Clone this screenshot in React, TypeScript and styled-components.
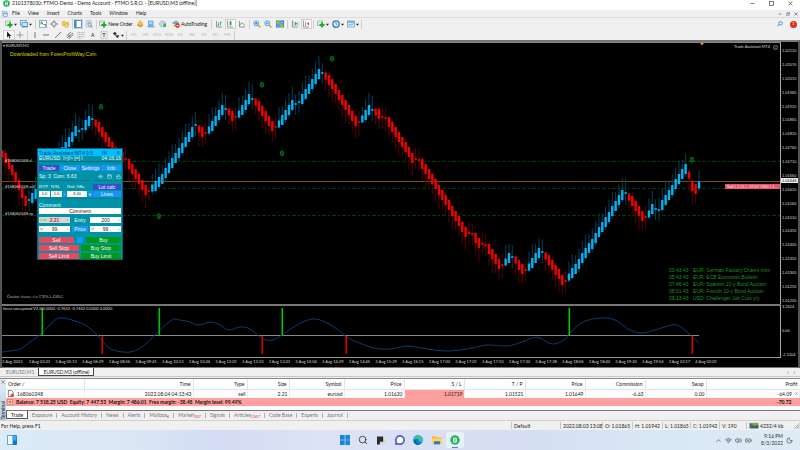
import React from "react";
import styled, { createGlobalStyle, css } from "styled-components";
import { Search, MessageCircle, Wifi, Volume2, BatteryCharging, Moon, ChevronUp, Camera, Eye, Calendar, Lock } from "lucide-react";

const ui = `"Lato", "Open Sans", sans-serif`;
const arial = `"Liberation Sans", Arial, sans-serif`;

const Global = createGlobalStyle`
  *, *::before, *::after { box-sizing: border-box; }
  body { margin: 0; background: #f0f0f0; font: 5px/8px ${ui}; color: #222; }
  button, input { font: inherit; color: inherit; border: 0; padding: 0; margin: 0; background: none; min-width: 0; border-radius: 0; }
  svg { display: block; flex: none; }
`;

const Page = styled.div`
  display: flex;
  flex-direction: column;
  min-height: 100vh;
  overflow: hidden;
  white-space: nowrap;
`;

/* ---------- title, menu and tool bars ---------- */
const TitleBar = styled.header`
  display: flex;
  align-items: center;
  gap: 2px;
  height: 10px;
  padding: 0 7px 3px 3px;
  background: #fff;
  line-height: 7px;
  color: #222;
`;
const WindowTitle = styled.h1`
  flex: 1;
  margin: 0;
  font: inherit;
`;
const WindowButtons = styled.div<{ $gap: number }>`
  display: flex;
  align-items: center;
  gap: ${(p) => p.$gap}px;
  margin-left: auto;
`;
const PlainButton = styled.button`
  display: flex;
  align-items: center;
  justify-content: center;
`;
const MenuBar = styled.nav`
  display: flex;
  align-items: center;
  height: 8px;
  padding: 0 2px;
  gap: 8px;
  line-height: 7px;
  border-bottom: 1px solid #dcdcdc;
`;
const MenuIcon = styled.span`
  margin-right: -4px;
`;
const Toolbar = styled.div<{ $h: number }>`
  display: flex;
  align-items: center;
  height: ${(p) => p.$h}px;
  padding: 0 3px;
`;
const Tools = styled.div<{ $w: number; $cols: number }>`
  display: grid;
  grid-template-columns: repeat(${(p) => p.$cols}, 1fr);
  width: ${(p) => p.$w}px;
  height: 10px;
`;
const Tool = styled.button<{ $on?: boolean; $faint?: boolean; $w?: number }>`
  display: flex;
  align-items: center;
  justify-content: center;
  gap: 1px;
  height: 10px;
  ${(p) => p.$w && `width: ${p.$w}px;`}
  color: ${(p) => (p.$faint ? "#b4b4b4" : "#111")};
  font: ${(p) => (p.$faint ? 4 : 5)}px/8px ${ui};
  ${(p) =>
    p.$on &&
    css`
      background: #fafafa;
      border: 1px solid #d0d0d0;
    `}
`;
const Divider = styled.span`
  width: 1px;
  height: 9px;
  margin: 0 1px;
  background: #cfcfcf;
`;
const Badge = styled.span`
  display: flex;
  align-items: center;
  justify-content: center;
  width: 7px;
  height: 7px;
  border-radius: 50%;
  background: #dd3018;
  color: #fff;
  font-size: 4px;
  line-height: 6px;
`;

/* ---------- chart ---------- */
const ChartFrame = styled.main`
  flex: 1;
  display: grid;
  grid-template-columns: 1fr 17px;
  grid-template-rows: 1fr 54px 9px;
  min-height: 300px;
  background: #000;
  color: #ddd;
  border: 2px solid #555;
  border-top-color: #777;
  border-bottom: 1px solid #777;
  font: 4px/6px ${ui};
`;
const Plot = styled.section`
  position: relative;
  min-height: 0;
  border-top: 1px solid #888;
  border-right: 1px solid #aaa;
`;
const SubPlot = styled(Plot)`
  border-top: 2px solid #777;
  border-bottom: 1px solid #999;
`;
const Fill = styled.svg`
  position: absolute;
  inset: 0;
  width: 100%;
  height: 100%;
`;
const Note = styled.div<{ $x?: number; $r?: number; $y: string; $c?: string; $s?: number; $f?: string }>`
  position: absolute;
  top: ${(p) => p.$y};
  ${(p) => (p.$r !== undefined ? `right: ${p.$r}px;` : `left: ${p.$x}px;`)}
  color: ${(p) => p.$c ?? "#ddd"};
  font: ${(p) => p.$s ?? 4}px/6px ${(p) => p.$f ?? ui};
`;
const PriceAxis = styled.div`
  position: relative;
  display: flex;
  flex-direction: column;
  justify-content: space-between;
  padding: 6px 0 0 1px;
  font-family: ${arial};
`;
const SubAxis = styled(PriceAxis)`
  padding: 0 0 0 1px;
`;
const PriceNow = styled.div`
  position: absolute;
  left: 0;
  right: 0;
  top: 52%;
  padding-left: 1px;
  background: #eee;
  color: #111;
  line-height: 5px;
`;
const SellTag = styled.div`
  position: absolute;
  right: 0;
  top: 54%;
  min-width: 55px;
  padding-left: 2px;
  background: #e8536a;
  color: #fde3e6;
  font: 4px/5px ${arial};
`;
const News = styled.ul`
  position: absolute;
  right: 6px;
  bottom: 2px;
  width: 105px;
  margin: 0;
  padding: 0;
  list-style: none;
  color: #1f961f;
  font: 5px/7px ${arial};
`;
const NewsItem = styled.li`
  display: grid;
  grid-template-columns: 24px 1fr;
`;
const TimeAxis = styled.div`
  grid-column: 1 / 3;
  display: grid;
  grid-template-columns: repeat(27, 1fr) 76px;
  line-height: 8px;
`;

/* ---------- trade assistant panel ---------- */
const Assistant = styled.form`
  position: absolute;
  left: 35px;
  top: 105px;
  width: 86px;
  display: flex;
  flex-direction: column;
  background: #0092a8;
  border: 1px solid #0b5f78;
  color: #e8fbff;
  font: 5px/6px ${arial};
`;
const PanelTitle = styled.div`
  display: flex;
  align-items: center;
  justify-content: space-between;
  height: 7px;
  padding: 0 2px 0 1px;
  background: #00bfff;
  color: #0a3d6e;
`;
const PanelRow = styled.div<{ $cols: string; $top?: number; $gap?: number }>`
  display: grid;
  grid-template-columns: ${(p) => p.$cols};
  align-items: center;
  gap: ${(p) => p.$gap ?? 2}px;
  margin-top: ${(p) => p.$top ?? 2}px;
  padding: 0 1px;
`;
const PanelStatus = styled.div`
  display: flex;
  justify-content: space-between;
  padding: 0 1px;
  height: 6px;
  line-height: 5px;
  border-bottom: 1px solid #0b6f86;
`;
const Btn = styled.button<{ $bg: string }>`
  height: 6px;
  line-height: 6px;
  background: ${(p) => p.$bg};
  color: #f2f8ff;
  text-align: center;
`;
const Field = styled.input<{ $loss?: boolean }>`
  width: 100%;
  height: 6px;
  background: ${(p) => (p.$loss ? "#d6d6d6" : "#fff")};
  color: ${(p) => (p.$loss ? "#e02030" : "#222")};
  font-weight: ${(p) => (p.$loss ? "bold" : "normal")};
  text-align: center;
`;
const FieldWrap = styled.label`
  position: relative;
  display: flex;
`;
const FieldTag = styled.span<{ $green?: boolean }>`
  position: absolute;
  left: 1px;
  top: 0;
  color: ${(p) => (p.$green ? "#2ecc40" : "#888")};
  font-size: 4px;
`;
const Spinner = styled.span`
  position: absolute;
  right: 1px;
  top: 0;
  color: #999;
  font-size: 3px;
`;
const Stack = styled.div`
  display: flex;
  flex-direction: column;
  gap: 1px;
`;
const Labelled = styled.label`
  display: flex;
  flex-direction: column;
  gap: 1px;
  font-size: 4px;
`;
const Spacer = styled.span`
  height: 6px;
`;
const PanelRule = styled.hr`
  width: 100%;
  margin: 1px 0 0;
  border: 0;
  border-top: 1px solid #0b7c92;
`;
const PanelIcons = styled.span`
  display: flex;
  gap: 4px;
  justify-self: end;
`;

/* ---------- terminal ---------- */
const ChartTabs = styled.div`
  display: flex;
  height: 9px;
  padding: 0 5px 0 2px;
  line-height: 8px;
  border-bottom: 1px solid #c8c8c8;
`;
const ChartTab = styled.button<{ $on?: boolean }>`
  display: block;
  padding: 0 4px;
  line-height: 8px;
  color: ${(p) => (p.$on ? "#222" : "#777")};
  ${(p) =>
    p.$on &&
    css`
      background: #fff;
      border: 1px solid #444;
      border-top: 0;
    `}
`;
const Terminal = styled.section`
  display: grid;
  grid-template-columns: 6px 1fr;
  margin-top: 1px;
  border-top: 1px solid #888;
`;
const Side = styled.div`
  display: flex;
  flex-direction: column;
  align-items: center;
  justify-content: space-between;
  padding-top: 1px;
  background: linear-gradient(#e6edf4, #b4cce0);
  overflow: hidden;
`;
const SideLabel = styled.span`
  writing-mode: vertical-rl;
  transform: rotate(180deg);
  line-height: 6px;
`;
const Pane = styled.div`
  background: #fff;
`;
const Orders = styled.table`
  width: 100%;
  table-layout: fixed;
  border-collapse: collapse;
`;
const Col = styled.col<{ $w?: number }>`
  ${(p) => p.$w && `width: ${p.$w}px;`}
`;
const Th = styled.th`
  height: 10px;
  padding: 0 2px;
  border-right: 1px solid #e4e4e4;
  border-bottom: 1px solid #e4e4e4;
  font: 5px/8px ${ui};
  text-align: right;
  &:first-child { text-align: left; }
  &:last-child { border-right: 0; }
`;
const Td = styled.td<{ $hot?: boolean }>`
  height: 9px;
  padding: 0 1px;
  border-right: 1px solid #eee;
  line-height: 8px;
  text-align: right;
  background: ${(p) => (p.$hot ? "#ff9e9e" : "#fff")};
  &:first-child { text-align: left; }
`;
const Balance = styled.td`
  height: 8px;
  padding: 0 1px;
  background: #ff9f9f;
  font: bold 5px/8px ${ui};
  color: #111;
`;
const Inline = styled.span<{ $end?: boolean }>`
  display: flex;
  align-items: center;
  justify-content: ${(p) => (p.$end ? "flex-end" : "flex-start")};
  gap: 3px;
`;
const ProfitTotal = styled.span`
  display: block;
  padding-right: 7px;
  text-align: right;
`;
const TermTabs = styled.div`
  display: flex;
  align-items: flex-start;
  height: 10px;
  margin-top: 4px;
  border-top: 1px solid #777;
  background: #f0f0f0;
`;
const TermTab = styled.button<{ $on?: boolean }>`
  display: flex;
  height: 8px;
  padding: 0 4px;
  line-height: 8px;
  color: ${(p) => (p.$on ? "#111" : "#777")};
  ${(p) =>
    p.$on &&
    css`
      background: #fff;
      border: 1px solid #555;
      border-top: 0;
    `}
`;
const Count = styled.sub`
  padding-top: 2px;
  color: #e8202c;
  font-size: 4px;
  line-height: 7px;
  vertical-align: baseline;
`;
const Bar = styled.span`
  width: 1px;
  height: 5px;
  margin-top: 2px;
  background: #b0b0b0;
`;

/* ---------- status and task bars ---------- */
const StatusBar = styled.footer`
  display: grid;
  grid-template-columns: 1fr 49px 42px 30px 30px 28px 29px 27px 54px;
  align-items: center;
  height: 10px;
  border-top: 1px solid #d0d0d0;
  padding-left: 1px;
`;
const StatusCell = styled.span`
  display: flex;
  align-items: center;
  gap: 1px;
  height: 7px;
  padding-left: 2px;
  border-left: 1px solid #c4c4c4;
  &:last-child > svg:last-child { margin: 0 0 0 auto; }
`;
const TaskBar = styled.nav`
  display: grid;
  grid-template-columns: 1fr 128px 1fr;
  align-items: center;
  height: 20px;
  padding: 0 7px;
  background: linear-gradient(90deg, #dcebf5, #dce8f5 15%, #d3dcf4 27%, #dbe3f4 40%, #d5def2 65%, #d9e6f4 80%, #deebf6);
`;
const Widgets = styled(PlainButton)`
  justify-self: start;
`;
const Apps = styled.div`
  display: grid;
  grid-template-columns: repeat(7, 1fr);
`;
const AppButton = styled.button<{ $on?: boolean }>`
  display: flex;
  align-items: center;
  justify-content: center;
  height: 16px;
  ${(p) =>
    p.$on &&
    css`
      background: linear-gradient(#3d8fd0, #3d8fd0) center bottom / 6px 1px no-repeat #e9f1f8;
      border-radius: 2px;
    `}
`;
const Tray = styled.div`
  display: flex;
  align-items: center;
  justify-content: flex-end;
  gap: 3px;
  color: #333;
`;
const Clock = styled.time`
  margin-left: 6px;
  text-align: right;
  line-height: 7px;
`;

/* ---------- icons ---------- */
const shapes: Record<string, React.ReactNode> = {
  logo: (<><circle cx="8" cy="8" r="7.5" fill="#1fb25a" /><ellipse cx="8" cy="8" rx="3.4" ry="4.6" fill="#fff" /><path d="M8 4v8" stroke="#1fb25a" strokeWidth="1.6" /></>),
  doc: (<><rect x="1" y="1" width="11" height="11" fill="#fff" stroke="#6d9fd6" strokeWidth="1.4" /><rect x="4" y="5" width="11" height="10" fill="#dcebfb" stroke="#5b8fc9" strokeWidth="1.4" /><path d="M4 7h11" stroke="#5b8fc9" strokeWidth="2" /></>),
  add: (<><path d="M1 2h10v9H1z" fill="#fff" stroke="#6b9080" strokeWidth="1.2" /><path d="M3 5h6M3 8h4" stroke="#7aa0b8" /><path d="M10 5v10M5 10h10" stroke="#12b322" strokeWidth="3.800" /></>),
  layers: (<><rect x="1" y="1" width="11" height="9" fill="#fff" stroke="#4c88c4" strokeWidth="1.500" /><rect x="4" y="5" width="11" height="9" fill="#cfe3f7" stroke="#4c88c4" strokeWidth="1.500" /><path d="M4 13h11" stroke="#4c88c4" strokeWidth="2" /></>),
  market: (<><rect x="1" y="1" width="14" height="14" fill="#fff" stroke="#58a7dd" strokeWidth="1.600" /><path d="M4 9V4h3M4 4l5 5" stroke="#25a83a" strokeWidth="2" fill="none" /><path d="M9 9h4v4" stroke="#e2572d" strokeWidth="2" fill="none" /></>),
  target: (<><circle cx="8" cy="8" r="4.500" fill="none" stroke="#666" strokeWidth="1.300" /><path d="M8 0v6M8 10v6M0 8h6M10 8h6" stroke="#666" strokeWidth="1.300" /></>),
  folder: (<><path d="M1 3h5l1 2h6v6H1z" fill="#f4cf4a" stroke="#c39a25" /><path d="M9 6l1.500 3 3.500.5-2.500 2.300.6 3.400L9 13.500l-3 1.700.6-3.400L4 9.500 7.500 9z" fill="#ffe373" stroke="#c39a25" strokeWidth=".8" /></>),
  panel: (<><rect x="1" y="1" width="14" height="14" fill="#fff" stroke="#3a7dc8" strokeWidth="1.600" /><path d="M1 1h4v14H1z" fill="#3a7dc8" /></>),
  tester: (<><path d="M2 1h10v13H2z" fill="#e3edf7" stroke="#8aa9c6" /><path d="M4 4h6M4 6h6M4 8h3" stroke="#7c9cc0" /><circle cx="9.500" cy="9" r="3.500" fill="#bfe0fa" stroke="#5f87ad" strokeWidth="1.300" /><path d="M12 12l3 3" stroke="#d0a030" strokeWidth="2.200" /></>),
  gem: (<><path d="M1 10l6-3 8 3-6 5z" fill="#d79a1a" /><path d="M4 8l4-7 4 4 1 5-5 2z" fill="#f5c242" stroke="#c0871a" strokeWidth=".8" /></>),
  user: (<><path d="M3 2h9v8H3z" fill="#a9d2f5" stroke="#4a8ecb" strokeWidth="1.400" /><path d="M1 14q2-5 7-4t7 4z" fill="#7db6e8" stroke="#4a8ecb" /></>),
  radio: (<><circle cx="7" cy="8" r="6" fill="none" stroke="#7fb4dc" strokeWidth="1.600" /><circle cx="7" cy="8" r="3" fill="none" stroke="#6aa0cc" strokeWidth="1.300" /><path d="M9 7h5v7H9z" fill="#3db552" /></>),
  auto: (<><path d="M1 6l7-4 6 4-6 3z" fill="#6cb0e4" stroke="#3b7fb8" /><path d="M2 9h7v5H4z" fill="#f2c44a" /><circle cx="11" cy="11" r="4.500" fill="#e0301e" /><path d="M9 11h4" stroke="#fff" strokeWidth="2" /></>),
  bars: (<><path d="M3 2v12h11" stroke="#666" fill="none" strokeWidth="1.300" /><path d="M7 5v7M5.500 10H7M11 3v8M11 5h2" stroke="#2b9a3c" strokeWidth="1.500" /></>),
  candles: (<><path d="M3 1v13h11" stroke="#666" fill="none" strokeWidth="1.300" /><path d="M9 1v12" stroke="#2b9a3c" /><path d="M7 3h4v7H7z" fill="#29b045" /></>),
  line: (<><path d="M3 2v12h11" stroke="#666" fill="none" strokeWidth="1.300" /><path d="M4 10q3-6 5-4t5 5" stroke="#2b9a3c" strokeWidth="1.400" fill="none" /></>),
  zoomIn: (<><path d="M10 10l5 5" stroke="#d5a62e" strokeWidth="3" /><circle cx="6.500" cy="6.500" r="5" fill="#c3e2fb" stroke="#4f94d2" strokeWidth="1.600" /><path d="M6.500 4v5M4 6.500h5" stroke="#2668b0" strokeWidth="1.500" /></>),
  zoomOut: (<><path d="M10 10l5 5" stroke="#d5a62e" strokeWidth="3" /><circle cx="6.500" cy="6.500" r="5" fill="#c3e2fb" stroke="#4f94d2" strokeWidth="1.600" /><path d="M4 6.500h5" stroke="#2668b0" strokeWidth="1.500" /></>),
  tiles: (<><path d="M0 1h7.500v6.500H0zM8.500 8.500H16V15H8.500z" fill="#3b9b37" /><path d="M8.500 1H16v6.500H8.500zM0 8.500h7.500V15H0z" fill="#3069bb" /><path d="M1.500 4.500h4M10 4.500h4M1.500 12h4M10 12h4" stroke="#e6f0ff" strokeWidth="2" /></>),
  scroll: (<><path d="M3 1v13h11" stroke="#666" fill="none" strokeWidth="1.300" /><path d="M6 3v9M14 3v9" stroke="#888" /><path d="M8 4l5 3.500L8 11z" fill="#28a745" /></>),
  shift: (<><path d="M3 1v13h11" stroke="#666" fill="none" strokeWidth="1.300" /><path d="M7 3v9" stroke="#4a7ab5" strokeWidth="1.400" /><path d="M14 4L9.500 7.500 14 11z" fill="#d8432b" /></>),
  clock: (<><circle cx="8" cy="8" r="6.500" fill="#dff0fd" stroke="#2f78c4" strokeWidth="2.500" /><path d="M8 4v4l3 2" stroke="#375" fill="none" strokeWidth="1.400" /></>),
  template: (<><rect x="1" y="2" width="14" height="12" fill="#d9ebfa" stroke="#5b9bd0" strokeWidth="1.400" /><path d="M1 4h14" stroke="#5b9bd0" strokeWidth="2.500" /><path d="M3 11l3-3 3 2 4-3" stroke="#5a9a50" fill="none" strokeWidth="1.300" /></>),
  find: (<><circle cx="9.500" cy="6" r="4.500" fill="#eef5ff" stroke="#3565c8" strokeWidth="2" /><path d="M6 9l-5 5" stroke="#3565c8" strokeWidth="2.600" /></>),
  cursor: (<path d="M4 1v12l3-3 2 5 2-1-2-4h4z" fill="#222" />),
  cross: (<path d="M8 1v14M1 8h14" stroke="#777" strokeWidth="1.300" />),
  vline: (<path d="M8 2v12" stroke="#555" strokeWidth="1.600" />),
  hline: (<path d="M2 8h12" stroke="#555" strokeWidth="1.600" />),
  trend: (<path d="M2 14L14 2" stroke="#555" strokeWidth="1.600" />),
  channel: (<path d="M1 10L10 2M2 14L14 4M6 15l9-8M5 7l3 6" stroke="#555" strokeWidth="1.500" />),
  fibo: (<path d="M1 3h14M1 7h14M1 11h14M1 14h9" stroke="#888" strokeWidth="1.200" strokeDasharray="2 1" />),
  label: (<><rect x="2" y="1" width="12" height="14" fill="none" stroke="#777" strokeDasharray="2 1.500" /><path d="M5 5h6M8 5v7" stroke="#333" strokeWidth="1.500" /></>),
  arrows: (<path d="M2 5l4-3 3 4-3 2zM8 9h6l-3 5zM5 8l5 4" fill="#333" stroke="#333" />),
  min: (<path d="M2 8h12" stroke="#333" strokeWidth="2" />),
  max: (<rect x="2" y="2" width="12" height="12" fill="none" stroke="#333" strokeWidth="2" />),
  restore: (<><path d="M5 5V2h9v8h-3" fill="none" stroke="#446a9c" strokeWidth="2" /><path d="M2 6h9v8H2z" fill="none" stroke="#446a9c" strokeWidth="2" /></>),
  close: (<path d="M2 2l12 12M14 2L2 14" stroke="#333" strokeWidth="2" />),
  face: (<><circle cx="8" cy="8" r="6.500" fill="none" stroke="#bbb" strokeWidth="1.800" /><path d="M5 6h2M9 6h2M5 11q3-3 6 0" stroke="#bbb" strokeWidth="1.600" fill="none" /></>),
  order: (<><path d="M3 1h7l4 4v10H3z" fill="#fff" stroke="#333" strokeWidth="1.400" /><circle cx="12" cy="12" r="3.600" fill="#e2451f" /></>),
  balance: (<><rect x="1" y="1" width="14" height="14" rx="2" fill="#ffd9c9" stroke="#c2583a" strokeWidth="1.500" /><path d="M8 4v8M4 8h8" stroke="#c2301a" strokeWidth="2" /></>),
  net: (<><path d="M0 2h20v12H0z" fill="#8f9f45" /><path d="M0 2l20 12H0z" fill="#3b6f87" /><path d="M0 14L20 6v8z" fill="#2f6378" /></>),
  grip: (<path d="M15 1L1 15M15 6l-9 9M15 11l-4 4" stroke="#888" strokeWidth="1.800" />),
  widget: (<><rect width="16" height="16" rx="2" fill="#1673c4" /><rect x="1" y="1" width="8" height="14" fill="#f1f8ff" /><rect x="9" y="1" width="6" height="8" fill="#2cb1f0" /></>),
  start: (<path d="M0 0h7.500v7.500H0zM8.500 0H16v7.500H8.500zM0 8.500h7.500V16H0zM8.500 8.500H16V16H8.500z" fill="#1786dc" />),
  tasks: (<><rect x="4" y="5" width="12" height="10" fill="#d9d9d9" /><path d="M0 1h11v9H5v5H0z" fill="#2b2b2b" /></>),
  edge: (<><circle cx="8" cy="8" r="7.800" fill="#1680d0" /><path d="M.4 7A7.800 7.800 0 0 1 15.800 8q0 3-3.500 3-2.500 0-2.300-2Q9 5 5 5.500 2 6 .4 9z" fill="#38c7a4" /><path d="M5 9q0 5 6 6-5 2-8.500-2T5 8z" fill="#0c5aa8" /></>),
  files: (<><path d="M0 2h6l2 2h8v10H0z" fill="#f7bc2e" /><path d="M0 6h16v8H0z" fill="#ffd55c" /><path d="M3 10h10v5H3z" fill="#2b7cc4" /></>),
};
const Icon = ({ n, s = 8, w }: { n: string; s?: number; w?: number }) => (
  <svg width={w ?? s} height={s} viewBox={w ? "0 0 20 16" : "0 0 16 16"} aria-hidden="true">{shapes[n]}</svg>
);
const Caret = () => (
  <svg width="3" height="3" viewBox="0 0 4 4" aria-hidden="true"><path d="M0 1h4L2 3.500z" fill="#222" /></svg>
);

/* ---------- data ---------- */
/* Runs of bars: direction and the middle of every body; a negative value is a doji. */
const runs: [1 | -1, number[]][] = [
  [-1, [154, 158, 164, 170, 177, 185, 193, 201]],
  [1, [-200, 198, 194, 189, 184, 178, 173, 168, 162, 157, 152, 147, 142, 137, 131, -131, -129, 125, 121, -119]],
  [-1, [123, 127, 132, 137, 142, 147, 152, 155, 157, -159, 164, 169, 174, 179, 185, 190, -191]],
  [1, [188, 186, 182, 179, 173, 168, 163, 158, 153, 148, 142, 137, 132, -125]],
  [-1, [129, 132, -133]],
  [1, [130, 126, 121, 115, 110, -109]],
  [-1, [112, 116, -117]],
  [1, [114, 110, 105, 99, -99]],
  [-1, [102, 106, 111, 116, 121, 126, -127]],
  [1, [124, 120, 115, 110, 105, -104, -102, 99, 94, 89, 84, 79, 74, -73]],
  [-1, [76, 80, 84, 89, 95, 100, 105, 110, 116, 121, -122]],
  [1, [119, 115, 110, -110]],
  [-1, [112, 114, -117, -118, 122, 127, 132, 137, 142, 147, 152, 158, -159, -160, 164, 169, 174, 179, 184, 190, 195, 200, 205, 211, 216, 221, 227, 232, -233, -234, 238, 243, -244, -245, 249, 254, 259, 264, -265]],
  [1, [262, 258, -257]],
  [-1, [260, 265, 269, -270]],
  [1, [267, 263, 258, 253, -252]],
  [-1, [256, 260, 265, 270, 274, 280, -281]],
  [1, [277, 273, 269, 264, 258, 253, 248, 244, 238, 232, 227, 222, 217, 211, 206, 200, 195, -193]],
  [-1, [197, 201, 206, 211, 216, -217]],
  [1, [214, 209, -209, -210, 205, 200, 195, 190, 184, 179, 174, 169]],
  [-1, [175, 186, 189]],
  [1, [185]],
];
const candles = runs.flatMap(([dir, ys]) => ys.map((y, i) => ({ dir, y: Math.abs(y) - 43, doji: y < 0, edge: i === 0 })));

const prices = ["1.02120", "1.02070", "1.02015", "1.01965", "1.01915", "1.01865", "1.01810", "1.01760", "1.01710", "1.01660", "1.01610", "1.01560", "1.01510", "1.01455", "1.01405", "1.01355", "1.01305", "1.01255", "1.01205"];
const times = ["2 Aug 2022", ..."03:23 05:13 06:29 08:56 09:41 10:13 10:24 12:01 13:10 13:23 14:04 14:29 14:45 15:29 16:15 17:00 17:01 17:10 17:30 17:38 18:06 18:40 19:20 19:54 22:17".split(" ").map((t) => `3 Aug ${t}`), "4 Aug 03:01"];
const news = [
  ["03:43:43", "EUR: German Factory Orders m/m"],
  ["05:43:43", "EUR: ECB Economic Bulletin"],
  ["07:46:43", "EUR: Spanish 10-y Bond Auction"],
  ["08:01:43", "EUR: French 10-y Bond Auction"],
  ["09:13:43", "USD: Challenger Job Cuts y/y"],
];
const wave: [number, number][] = [[0, 46], [8, 45], [18, 43], [28, 36], [40, 27], [53, 14], [60, 12], [70, 14], [83, 19], [95, 29], [106, 41], [115, 45], [128, 46], [140, 41], [155, 27], [170, 14], [178, 14], [188, 16], [196, 19], [209, 16], [218, 19], [227, 24], [238, 21], [248, 23], [261, 33], [271, 34], [280, 29], [290, 22], [303, 15], [314, 13], [325, 17], [335, 23], [343, 30], [355, 36], [372, 42], [388, 43], [405, 40], [425, 43], [445, 45], [465, 43], [485, 39], [505, 40], [520, 36], [530, 32], [538, 32], [550, 38], [562, 34], [568, 27], [581, 16], [598, 12], [613, 14], [628, 24], [640, 27], [653, 24], [666, 20], [675, 19], [685, 26], [697, 37]];
const smooth = (pts: [number, number][]) =>
  pts.slice(1).reduce((d, p, i) => {
    const q = pts[i];
    const a = pts[Math.max(0, i - 1)];
    const b = pts[Math.min(pts.length - 1, i + 2)];
    return `${d}C${q[0] + (p[0] - a[0]) / 6} ${q[1] + (p[1] - a[1]) / 6} ${p[0] - (b[0] - q[0]) / 6} ${p[1] - (b[1] - q[1]) / 6} ${p[0]} ${p[1]}`;
  }, `M${pts[0][0]} ${pts[0][1]}`);

const Signal = ({ x, y, up }: { x: number; y: number; up?: boolean }) => (
  <path transform={`translate(${x} ${y}) scale(1 ${up ? -1 : 1})`} d="M-1.200-2.300h2.400V.6h.8L0 2.600-2 .6h.8z" fill="#032" stroke="#0a930a" strokeWidth=".8" />
);

const Candles = () => (
  <Fill viewBox="0 0 778 261" preserveAspectRatio="none" role="img" aria-label="EURUSD M3 price chart">
    {[118, 145, 172].map((y) => (
      <path key={y} d={`M0 ${y}.400H778`} stroke="#064006" strokeDasharray="4 2 2 2" />
    ))}
    <path d="M0 138.500H778" stroke="#77520f" />
    {candles.map((c, i) => {
      const x = i * (10 / 3) + 0.3;
      const h = c.doji ? 0.8 : c.edge ? 3.5 : 5;
      const long = 9 + ((i * 5) % 4) * 1.5;
      const short = c.doji ? 10 : (i * 3) % 4;
      const top = c.y - h - (c.dir > 0 ? long : short);
      const bottom = c.y + h + (c.dir > 0 ? short : long);
      return (
        <g key={i}>
          <path d={`M${x} ${top}V${bottom}`} stroke={c.dir > 0 ? "#00405a" : "#5a0000"} />
          <rect x={x - 1.2} y={c.y - h} width="2.400" height={h * 2} fill={c.dir > 0 ? "#00b4f5" : "#f50000"} />
        </g>
      );
    })}
    <Signal x={99} y={64} />
    <Signal x={260} y={42} />
    <Signal x={330} y={16} />
    <Signal x={690} y={117} />
    <Signal x={157} y={173} up />
    <Signal x={280} y={110} up />
    <path d="M698 0h4l-2 2.500z" fill="#e89020" />
  </Fill>
);

const Indicator = () => (
  <Fill viewBox="0 0 778 51" preserveAspectRatio="none" role="img" aria-label="Oscillator">
    <path d="M0 29.500H697" stroke="#888" />
    <path d={smooth(wave)} fill="none" stroke="#063f78" />
    {[40, 157, 280, 567].map((x) => <path key={x} d={`M${x + 0.3} 2V29`} stroke="#00c800" strokeWidth="1.600" />)}
    {[100, 260, 344, 690].map((x) => <path key={x} d={`M${x + 0.3} 30V48`} stroke="#e00000" strokeWidth="1.600" />)}
  </Fill>
);

const blue = "#1496f5";
const royal = "#3450c8";
const red = "#e8485c";
const green = "#009a10";

const TradePanel = () => (
  <Assistant onSubmit={(e) => e.preventDefault()}>
    <PanelTitle>Trade Assistant MT4 9.5<Camera size={5} /><span>X</span></PanelTitle>
    <PanelStatus><span>EURUSD: I&gt;|I&gt; [=] I</span><span>04:16:16</span></PanelStatus>
    <PanelRow $cols="20px 1fr 1fr 1fr" $top={3} $gap={1}>
      <Btn type="button" $bg={royal}>Trade</Btn><Btn type="button" $bg={blue}>Close</Btn>
      <Btn type="button" $bg={blue}>Settings</Btn><Btn type="button" $bg={blue}>Info</Btn>
    </PanelRow>
    <PanelRow $cols="1fr auto" $top={2}>
      <span>Sp: 3&nbsp; Com: 6.63</span>
      <PanelIcons><Eye size={5} /><Calendar size={5} /><Lock size={5} /></PanelIcons>
    </PanelRow>
    <PanelRule />
    <PanelRow $cols="11px 11px 3px 20px 4px 1fr" $top={3} $gap={1}>
      <Labelled>R/TP<Field defaultValue="1.0" /></Labelled>
      <Labelled>R/SL<Field defaultValue="1.0" /></Labelled>
      <Stack><Spacer /><Btn type="button" $bg={blue}>-</Btn></Stack>
      <Labelled>Risk %Ba<Field defaultValue="3.00" /></Labelled>
      <Stack><Spacer /><Btn type="button" $bg={blue}>+</Btn></Stack>
      <Stack><Btn type="button" $bg={royal}>Lot calc</Btn><Btn type="button" $bg={blue}>Lines</Btn></Stack>
    </PanelRow>
    <PanelRule />
    <PanelRow $cols="1fr" $top={3} $gap={0}>
      <label htmlFor="comment">Comment</label>
      <Field id="comment" defaultValue="Comment" />
    </PanelRow>
    <PanelRow $cols="1fr 16px 1fr" $top={3}>
      <FieldWrap><FieldTag $green>Lot:</FieldTag><Field $loss defaultValue="2.21" aria-label="Lot" /><Spinner>▴</Spinner></FieldWrap>
      <Btn type="button" $bg="transparent">Entry</Btn>
      <FieldWrap><Field defaultValue="200" aria-label="Entry" /><Spinner>▴</Spinner></FieldWrap>
    </PanelRow>
    <PanelRow $cols="1fr 16px 1fr" $top={3}>
      <FieldWrap><FieldTag>tp</FieldTag><Field defaultValue="99" /><Spinner>▴</Spinner></FieldWrap>
      <Btn type="button" $bg={blue}>Price</Btn>
      <FieldWrap><FieldTag>sl</FieldTag><Field defaultValue="99" /><Spinner>▴</Spinner></FieldWrap>
    </PanelRow>
    <PanelRow $cols="1fr 6px 1fr" $top={5} $gap={3}>
      <Btn type="button" $bg={red}>Sell</Btn><Btn type="button" $bg={blue} aria-label="Toggle" /><Btn type="button" $bg={green}>Buy</Btn>
    </PanelRow>
    <PanelRow $cols="1fr 1fr"><Btn type="button" $bg={red}>Sell Stop</Btn><Btn type="button" $bg={green}>Buy Stop</Btn></PanelRow>
    <PanelRow $cols="1fr 1fr"><Btn type="button" $bg={red}>Sell Limit</Btn><Btn type="button" $bg={green}>Buy Limit</Btn></PanelRow>
  </Assistant>
);

const ToolSet = ({ w, names, on, caret }: { w: number; names: string[]; on?: string; caret?: boolean }) => (
  <Tools $w={w} $cols={names.length}>
    {names.map((n) => <Tool key={n} $on={n === on} aria-label={n}><Icon n={n} />{caret && <Caret />}</Tool>)}
  </Tools>
);

const termTabs: [string, string?][] = [["Trade"], ["Exposure"], ["Account History"], ["News"], ["Alerts"], ["Mailbox", "6"], ["Market", "107"], ["Signals"], ["Articles", "1167"], ["Code Base"], ["Experts"], ["Journal"]];

export default function App() {
  return (
    <Page>
      <Global />
      <TitleBar>
        <Icon n="logo" s={7} />
        <WindowTitle>2101378030: FTMO-Demo - Demo Account - FTMO S.R.O. - [EURUSD,M3 (offline)]</WindowTitle>
        <WindowButtons $gap={14}>
          {["min", "max", "close"].map((n) => <PlainButton key={n} aria-label={n}><Icon n={n} s={5} /></PlainButton>)}
        </WindowButtons>
      </TitleBar>
      <MenuBar>
        <MenuIcon><Icon n="doc" s={6} /></MenuIcon>
        {["File", "View", "Insert", "Charts", "Tools", "Window", "Help"].map((m) => <PlainButton key={m}>{m}</PlainButton>)}
        <WindowButtons $gap={4}>
          {["min", "restore", "close"].map((n) => <PlainButton key={n} aria-label={`Chart ${n}`}><Icon n={n} s={4} /></PlainButton>)}
        </WindowButtons>
      </MenuBar>
      <Toolbar $h={12}>
        <ToolSet w={31} names={["add", "layers"]} caret />
        <Divider />
        <ToolSet w={58} names={["market", "target", "folder", "panel", "tester"]} on="panel" />
        <Divider />
        <Tool $w={36}><Icon n="add" />New Order</Tool>
        <ToolSet w={35} names={["gem", "user", "radio"]} />
        <Tool $w={41}><Icon n="auto" />AutoTrading</Tool>
        <Divider />
        <ToolSet w={35} names={["bars", "candles", "line"]} on="candles" />
        <Divider />
        <ToolSet w={35} names={["zoomIn", "zoomOut", "tiles"]} />
        <Divider />
        <ToolSet w={23} names={["scroll", "shift"]} on="shift" />
        <Divider />
        <ToolSet w={45} names={["add", "clock", "template"]} caret />
        <Divider />
        <WindowButtons $gap={7}>
          <PlainButton aria-label="Search"><Icon n="find" s={6} /></PlainButton>
          <PlainButton aria-label="Notifications"><Badge>1</Badge></PlainButton>
        </WindowButtons>
      </Toolbar>
      <Toolbar $h={10}>
        <ToolSet w={23} names={["cursor", "cross"]} on="cursor" />
        <Divider />
        <ToolSet w={58} names={["vline", "hline", "trend", "channel", "fibo"]} />
        <Tools $w={23} $cols={2}><Tool>A</Tool><Tool aria-label="label"><Icon n="label" /></Tool></Tools>
        <ToolSet w={15} names={["arrows"]} caret />
        <Divider />
        <Tools $w={105} $cols={9}>
          {["M1", "M5", "M15", "M30", "H1", "H4", "D1", "W1", "MN"].map((t) => <Tool key={t} $faint>{t}</Tool>)}
        </Tools>
        <Divider />
      </Toolbar>

      <ChartFrame>
        <Plot>
          <Candles />
          <Note $x={1} $y="0">▾ EURUSD,M3</Note>
          <Note $x={8} $y="8px" $c="#d8d800" $s={5} $f={arial}>Downloaded from ForexProfitWay.Com</Note>
          <Note $r={2} $y="1px"><Inline>Trade Assistant MT4<Icon n="face" s={5} /></Inline></Note>
          <Note $x={3} $y="44%">#168060248 sl</Note>
          <Note $x={3} $y="54%">#168060248 sell</Note>
          <Note $x={3} $y="64.500%">#168060248 tp</Note>
          <Note $x={5} $y="96%" $s={5} $c="#aaa" $f={`"Liberation Serif", serif`}>Özünt össze-éu FXSA.ORG</Note>
          <News>{news.map(([t, s]) => <NewsItem key={t}><time>{t}</time><span>{s}</span></NewsItem>)}</News>
          <SellTag>Sell | 2.21 | -59.67 USD | 1...</SellTag>
          <TradePanel />
        </Plot>
        <PriceAxis>
          {prices.map((p) => <span key={p}>{p}</span>)}
          <PriceNow>1.01646</PriceNow>
        </PriceAxis>
        <SubPlot>
          <Indicator />
          <Note $x={1} $y="0">forex sweepmod V2.2(0.0000 -0.7652 -0.7652 0.0000 0.0000</Note>
        </SubPlot>
        <SubAxis><span>3.2624</span><span>0.00</span><span>-2.5104</span></SubAxis>
        <TimeAxis>{times.map((t) => <span key={t}>{t}</span>)}</TimeAxis>
      </ChartFrame>

      <ChartTabs>
        <ChartTab>EURUSD,M1</ChartTab>
        <ChartTab $on>EURUSD,M3 (offline)</ChartTab>
        <WindowButtons $gap={5}><PlainButton>‹</PlainButton><PlainButton>›</PlainButton></WindowButtons>
      </ChartTabs>

      <Terminal>
        <Side><PlainButton aria-label="Close terminal"><Icon n="close" s={4} /></PlainButton><SideLabel>Terminal</SideLabel></Side>
        <Pane>
          <Orders>
            <colgroup>
              {[78, 109, 54, 42, 55, 60, 60, 61, 60, 60, 61].map((w, i) => <Col key={i} $w={w} />)}
              <Col />
            </colgroup>
            <thead>
              <tr>{["Order   ∕", "Time", "Type", "Size", "Symbol", "Price", "S / L", "T / P", "Price", "Commission", "Swap", "Profit"].map((h, i) => <Th key={i}>{h}</Th>)}</tr>
            </thead>
            <tbody>
              <tr>
                <Td><Inline><Icon n="order" s={7} />168060248</Inline></Td>
                <Td>2022.08.04 04:13:43</Td><Td>sell</Td><Td>2.21</Td><Td>eurusd</Td><Td>1.01620</Td>
                <Td $hot>1.01719</Td><Td>1.01521</Td><Td>1.01649</Td><Td>-6.63</Td><Td>0.00</Td>
                <Td><Inline $end>-64.09<Icon n="close" s={3} /></Inline></Td>
              </tr>
              <tr>
                <Balance colSpan={11}><Inline><Icon n="balance" s={6} />Balance: 7 518.25 USD&nbsp; Equity: 7 447.53&nbsp; Margin: 7 486.01&nbsp; Free margin: -38.48&nbsp; Margin level: 99.49%</Inline></Balance>
                <Balance><ProfitTotal>-70.72</ProfitTotal></Balance>
              </tr>
            </tbody>
          </Orders>
          <TermTabs>
            {termTabs.map(([t, n], i) => (
              <React.Fragment key={t}>
                <TermTab $on={i === 0}>{t}{n && <Count>{n}</Count>}</TermTab>
                {i > 0 && <Bar />}
              </React.Fragment>
            ))}
          </TermTabs>
        </Pane>
      </Terminal>

      <StatusBar>
        <span>For Help, press F1</span>
        <StatusCell>Default</StatusCell>
        <StatusCell>2022.08.03 13:08</StatusCell>
        <StatusCell>O: 1.01865</StatusCell>
        <StatusCell>H: 1.01942</StatusCell>
        <StatusCell>L: 1.01865</StatusCell>
        <StatusCell>C: 1.01942</StatusCell>
        <StatusCell>V: 190</StatusCell>
        <StatusCell><Icon n="net" s={7} w={10} />4232/4 kb<Icon n="grip" s={6} /></StatusCell>
      </StatusBar>

      <TaskBar>
        <Widgets aria-label="Widgets"><Icon n="widget" s={10} /></Widgets>
        <Apps>
          <AppButton aria-label="Start"><Icon n="start" s={10} /></AppButton>
          <AppButton aria-label="Search"><Search size={10} color="#333" /></AppButton>
          <AppButton aria-label="Task view"><Icon n="tasks" s={9} /></AppButton>
          <AppButton aria-label="Chat"><MessageCircle size={10} color="#5b5fc7" strokeWidth={4} fill="#fff" /></AppButton>
          <AppButton aria-label="Edge"><Icon n="edge" s={10} /></AppButton>
          <AppButton aria-label="Files"><Icon n="files" s={10} /></AppButton>
          <AppButton aria-label="FTMO" $on><Icon n="logo" s={10} /></AppButton>
        </Apps>
        <Tray>
          <ChevronUp size={7} /><Wifi size={7} /><Volume2 size={7} /><BatteryCharging size={7} />
          <Clock>9:16 PM<br />8/3/2022</Clock>
          <Moon size={7} />
        </Tray>
      </TaskBar>
    </Page>
  );
}
